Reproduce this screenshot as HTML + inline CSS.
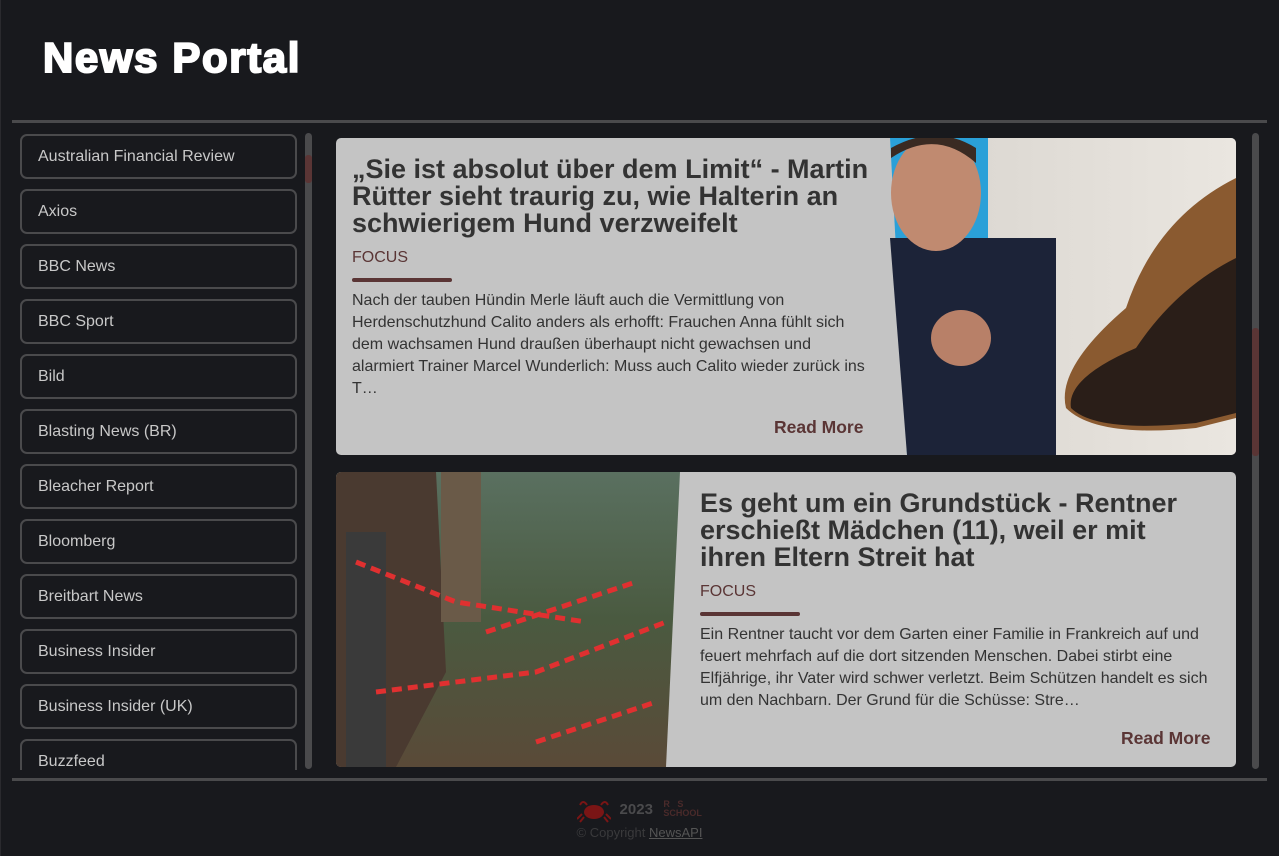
<!DOCTYPE html>
<html><head><meta charset="utf-8"><style>
*{box-sizing:border-box;margin:0;padding:0}
body{width:1279px;height:856px;background:#18191d;font-family:"Liberation Sans",Arial,sans-serif;position:relative;overflow:hidden}
h1{position:absolute;left:43px;top:34px;font-size:42px;font-weight:bold;color:#fff;letter-spacing:1.6px;-webkit-text-stroke:2px #fff}
.line{position:absolute;left:12px;width:1255px;height:3px;background:#4a4a4c}
.side{position:absolute;left:20px;top:134px;width:277px;height:636px;overflow:hidden}
.item{height:45px;border:2px solid #4a4a4c;border-radius:7px;margin-bottom:10px;color:#c8c8c8;font-size:16px;padding-left:16px;line-height:42px}
.sb{position:absolute;width:7px;border-radius:4px;background:#4a4a4c}
.thumb{position:absolute;left:0;width:7px;background:#5a3535;border-radius:3px}
.card{position:absolute;left:336px;width:900px;background:#c4c4c4;border-radius:5px;overflow:hidden}
.t{position:absolute}
.t h2{font-size:27px;line-height:27px;color:#333;font-weight:bold}
.src{color:#5a3535;font-size:16px;margin-top:12px}
.bar{width:100px;height:4px;background:#5a3535;border-radius:2px;margin-top:11px}
.desc{color:#333;font-size:16px;line-height:22px;margin-top:8px}
.rm{position:absolute;color:#5a3535;font-weight:bold;font-size:17.5px}
.foot{position:absolute;top:799px;left:0;width:1279px;text-align:center}
</style></head><body>
<div style="position:absolute;left:0;top:0;width:1px;height:856px;background:#2a2a2e"></div>
<h1>News Portal</h1>
<div class="line" style="top:120px"></div>
<div class="side">
<div class="item">Australian Financial Review</div>
<div class="item">Axios</div>
<div class="item">BBC News</div>
<div class="item">BBC Sport</div>
<div class="item">Bild</div>
<div class="item">Blasting News (BR)</div>
<div class="item">Bleacher Report</div>
<div class="item">Bloomberg</div>
<div class="item">Breitbart News</div>
<div class="item">Business Insider</div>
<div class="item">Business Insider (UK)</div>
<div class="item">Buzzfeed</div>
</div>
<div class="sb" style="left:305px;top:133px;height:636px"><div class="thumb" style="top:22px;height:28px"></div></div>
<div class="sb" style="left:1252px;top:133px;height:636px"><div class="thumb" style="top:195px;height:128px"></div></div>

<div class="card" style="top:138px;height:317px">
 <svg style="position:absolute;left:0;top:0" width="900" height="317">
  <defs><linearGradient id="g1" x1="0" x2="1"><stop offset="0" stop-color="#d8d4ce"/><stop offset="1" stop-color="#eae6e0"/></linearGradient></defs>
  <polygon points="554,0 900,0 900,317 571,317" fill="url(#g1)"/>
  <polygon points="554,0 652,0 652,317 571,317" fill="#2aa0d8"/>
  <polygon points="554,100 720,100 720,317 571,317" fill="#1c2338"/>
  <ellipse cx="600" cy="55" rx="45" ry="58" fill="#c08a70"/>
  <path d="M555 20 Q600 -10 640 25 L640 10 Q600 -15 555 10Z" fill="#3a2a22"/>
  <ellipse cx="625" cy="200" rx="30" ry="28" fill="#b88068"/>
  <path d="M900 40 Q820 80 790 170 Q720 230 730 270 Q760 300 860 290 L900 280Z" fill="#8a5a30"/>
  <path d="M900 120 Q840 150 800 210 Q730 240 735 270 Q760 295 860 285 L900 275Z" fill="#2a1e18"/>
 </svg>
 <div class="t" style="left:16px;top:18px;width:530px">
  <h2>„Sie ist absolut über dem Limit“ - Martin Rütter sieht traurig zu, wie Halterin an schwierigem Hund verzweifelt</h2>
  <div class="src">FOCUS</div><div class="bar"></div>
  <div class="desc" style="width:520px">Nach der tauben Hündin Merle läuft auch die Vermittlung von Herdenschutzhund Calito anders als erhofft: Frauchen Anna fühlt sich dem wachsamen Hund draußen überhaupt nicht gewachsen und alarmiert Trainer Marcel Wunderlich: Muss auch Calito wieder zurück ins T…</div>
 </div>
 <div class="rm" style="left:438px;top:279px">Read More</div>
</div>

<div class="card" style="top:472px;height:295px">
 <svg style="position:absolute;left:0;top:0" width="900" height="295">
  <defs><linearGradient id="g2" x1="0" y1="0" x2="0" y2="1"><stop offset="0" stop-color="#5a7060"/><stop offset=".5" stop-color="#4a5a40"/><stop offset="1" stop-color="#5a4a38"/></linearGradient></defs>
  <polygon points="0,0 344,0 330,295 0,295" fill="url(#g2)"/>
  <polygon points="0,0 100,0 110,200 60,295 0,295" fill="#4a3a30"/>
  <rect x="105" y="0" width="40" height="150" fill="#6a5a48"/>
  <rect x="10" y="60" width="40" height="235" fill="#3a3a3a"/>
  <path d="M20 90 L120 130 L250 150 M40 220 L200 200 L330 150 M150 160 L300 110 M200 270 L320 230" stroke="#e03030" stroke-width="5" fill="none" stroke-dasharray="10 6"/>
 </svg>
 <div class="t" style="left:364px;top:18px;width:495px">
  <h2>Es geht um ein Grundstück - Rentner erschießt Mädchen (11), weil er mit ihren Eltern Streit hat</h2>
  <div class="src">FOCUS</div><div class="bar"></div>
  <div class="desc" style="width:515px">Ein Rentner taucht vor dem Garten einer Familie in Frankreich auf und feuert mehrfach auf die dort sitzenden Menschen. Dabei stirbt eine Elfjährige, ihr Vater wird schwer verletzt. Beim Schützen handelt es sich um den Nachbarn. Der Grund für die Schüsse: Stre…</div>
 </div>
 <div class="rm" style="left:785px;top:256px">Read More</div>
</div>

<div class="line" style="top:778px"></div>
<div class="foot">
 <span style="display:inline-block;vertical-align:middle;width:32px;height:20px;position:relative">
  <svg width="34" height="24"><ellipse cx="17" cy="13" rx="10" ry="7" fill="#7a1515"/><path d="M3 6 Q6 0 10 6 M31 6 Q28 0 24 6 M5 15 L0 20 M29 15 L34 20 M7 18 L3 23 M27 18 L31 23" stroke="#7a1515" stroke-width="2" fill="none"/></svg>
 </span>
 <span style="color:#4a4a4c;font-weight:bold;font-size:15px;vertical-align:middle;margin:0 6px">2023</span>
 <span style="color:#4a2a2a;font-weight:bold;font-size:9px;line-height:9px;display:inline-block;vertical-align:middle;text-align:left">R&nbsp;&nbsp;&nbsp;S<br>SCHOOL</span>
 <div style="color:#3a3a3c;font-size:13px;margin-top:6px">© Copyright <span style="color:#555;text-decoration:underline">NewsAPI</span></div>
</div>
</body></html>
